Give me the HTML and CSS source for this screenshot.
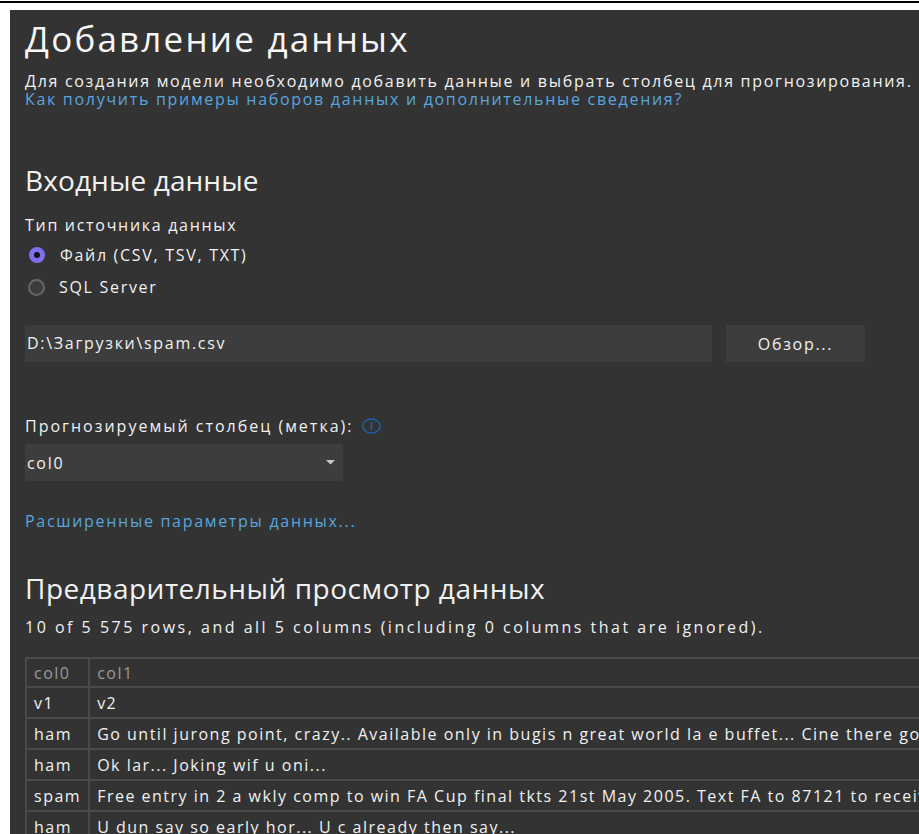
FILE: index.html
```html
<!DOCTYPE html>
<html lang="ru">
<head>
<meta charset="utf-8">
<title>Добавление данных</title>
<link rel="stylesheet" href="styles.css">
</head>
<body>
<div class="topline"></div>
<main class="panel">
  <h1 class="title">Добавление данных</h1>
  <p class="lead">Для создания модели необходимо добавить данные и выбрать столбец для прогнозирования.</p>
  <a class="link" href="#">Как получить примеры наборов данных и дополнительные сведения?</a>

  <h2 class="section">Входные данные</h2>
  <div class="field-label">Тип источника данных</div>
  <div class="radio-group">
    <label class="radio is-checked"><span class="dot"></span>Файл (CSV, TSV, TXT)</label>
    <label class="radio"><span class="dot"></span>SQL Server</label>
  </div>

  <div class="file-row">
    <div class="textbox">D:\Загрузки\spam.csv</div>
    <button class="btn" type="button">Обзор...</button>
  </div>

  <div class="field-label label-column">Прогнозируемый столбец (метка):
    <svg class="info" width="19" height="16" viewBox="0 0 19 16" aria-hidden="true">
      <ellipse cx="9.5" cy="8" rx="8.6" ry="7.1" fill="none" stroke="#1b62b0" stroke-width="1.5"/>
      <line x1="9.5" y1="4" x2="9.5" y2="12" stroke="#1b62b0" stroke-width="1.6"/>
    </svg>
  </div>
  <div class="select">
    <span>col0</span>
    <svg class="caret" width="9" height="5" viewBox="0 0 9 5" aria-hidden="true"><path d="M0 0h9L4.5 4.5z" fill="#c8c8c8"/></svg>
  </div>

  <a class="link link-advanced" href="#">Расширенные параметры данных...</a>

  <h2 class="section section-preview">Предварительный просмотр данных</h2>
  <p class="summary">10 of 5 575 rows, and all 5 columns (including 0 columns that are ignored).</p>

  <table class="grid">
    <thead>
      <tr><th class="c0">col0</th><th>col1</th></tr>
    </thead>
    <tbody>
      <tr><td class="c0">v1</td><td>v2</td></tr>
      <tr><td class="c0">ham</td><td>Go until jurong point, crazy.. Available only in bugis n great world la e buffet... Cine there got amore wat...</td></tr>
      <tr><td class="c0">ham</td><td>Ok lar... Joking wif u oni...</td></tr>
      <tr><td class="c0">spam</td><td>Free entry in 2 a wkly comp to win FA Cup final tkts 21st May 2005. Text FA to 87121 to receive entry question(std txt rate)</td></tr>
      <tr><td class="c0">ham</td><td>U dun say so early hor... U c already then say...</td></tr>
    </tbody>
  </table>
</main>
</body>
</html>
```

FILE: styles.css
```css
html, body {
  margin: 0;
  height: 100%;
  background: #ffffff;
  overflow: hidden;
}

body {
  font-family: "Open Sans", "Noto Sans", sans-serif;
  color: #f1f1f1;
}

.topline {
  height: 2px;
  margin-top: 1px;
  background: #000;
}

.panel {
  margin: 7px 0 0 10px;
  height: calc(100% - 10px);
  background: #333333;
  padding: 0 0 0 15px;
  overflow: hidden;
  white-space: nowrap;
}

/* headings */
.title {
  margin: 0;
  padding-top: 9px;
  font-size: 35px;
  font-weight: 400;
  line-height: 40px;
  letter-spacing: 2.2px;
  color: #f6f6f6;
}

.section {
  margin: 56px 0 0;
  font-size: 28px;
  font-weight: 400;
  line-height: 32px;
  letter-spacing: 0.1px;
}

.section-preview {
  margin-top: 42px;
  letter-spacing: 0.5px;
}

/* body text */
.lead,
.link,
.field-label,
.radio,
.summary,
.textbox,
.btn,
.select {
  font-size: 16px;
  letter-spacing: 1.7px;
}

.lead {
  margin: 13px 0 0;
  line-height: 18px;
}

.link {
  display: block;
  color: #58a6df;
  text-decoration: none;
  line-height: 18px;
}

.field-label {
  margin-top: 19px;
  line-height: 20px;
  display: flex;
  align-items: center;
  gap: 8px;
}

/* radio buttons */
.radio-group {
  display: flex;
  flex-direction: column;
  margin-top: 10px;
  gap: 12px;
}

.radio {
  display: flex;
  align-items: center;
  gap: 14px;
  line-height: 20px;
}

.dot {
  flex: none;
  width: 17px;
  height: 17px;
  box-sizing: border-box;
  border-radius: 50%;
  margin-left: 3px;
  background: #3c3c3c;
  border: 2px solid #666666;
}

.radio.is-checked .dot {
  width: 16px;
  height: 16px;
  margin-left: 4px;
  margin-right: 1px;
  background: #121212;
  border: 5px solid #806ff0;
}

/* file picker */
.file-row {
  display: flex;
  gap: 14px;
  margin-top: 28px;
}

.textbox {
  width: 687px;
  height: 37px;
  box-sizing: border-box;
  padding: 0 2px;
  background: #3d3d3d;
  line-height: 37px;
}

.btn {
  width: 139px;
  height: 37px;
  border: 0;
  padding: 0;
  background: #3d3d3d;
  color: #f1f1f1;
  font-family: inherit;
}

/* label column picker */
.label-column {
  margin-top: 54px;
  letter-spacing: 2px;
  gap: 9px;
}

.select {
  width: 318px;
  height: 37px;
  box-sizing: border-box;
  margin-top: 8px;
  padding: 0 8px 0 2px;
  background: #3d3d3d;
  display: flex;
  align-items: center;
  justify-content: space-between;
}

.link-advanced {
  margin-top: 31px;
}

.summary {
  margin: 13px 0 0;
  line-height: 20px;
  letter-spacing: 2.5px;
}

/* preview grid */
.grid {
  margin-top: 20px;
  border-collapse: collapse;
  font-size: 16px;
  letter-spacing: 1.5px;
  white-space: nowrap;
}

.grid th,
.grid td {
  border: 2px solid #4a4a4a;
  padding: 0 7px;
  height: 29px;
  text-align: left;
  font-weight: 400;
}

.grid th {
  height: 27px;
  color: #9a9a9a;
}

.grid .c0 {
  width: 46px;
}
```
